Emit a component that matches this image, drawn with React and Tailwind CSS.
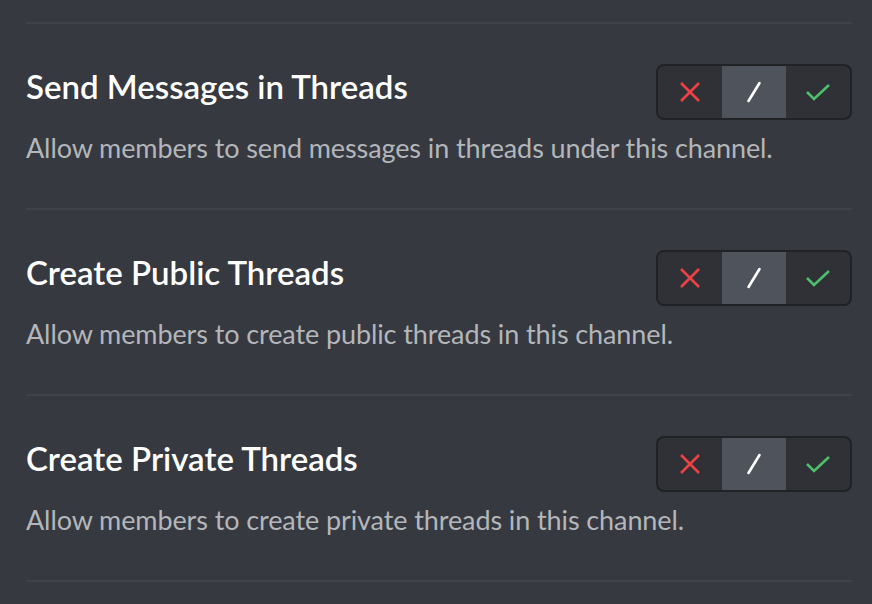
import React from "react";

const rows = [
  { title: "Send Messages in Threads", desc: "Allow members to send messages in threads under this channel." },
  { title: "Create Public Threads", desc: "Allow members to create public threads in this channel." },
  { title: "Create Private Threads", desc: "Allow members to create private threads in this channel." },
];

function Toggle() {
  return (
    <div className="flex h-[56px] w-[196px] shrink-0 overflow-hidden rounded-[8px] border-2 border-[#202225] bg-[#2f3136]">
      <div className="flex w-[64px] items-center justify-center">
        <svg width="22" height="22" viewBox="0 0 22 22" fill="none">
          <path d="M2 2L20 20M20 2L2 20" stroke="#ed4245" strokeWidth="2.6" strokeLinecap="butt" />
        </svg>
      </div>
      <div className="flex w-[64px] items-center justify-center bg-[#4f545c]">
        <svg width="16" height="24" viewBox="0 0 16 24" fill="none">
          <path d="M13.5 3L2.5 21" stroke="#ffffff" strokeWidth="2.6" strokeLinecap="round" />
        </svg>
      </div>
      <div className="flex w-[64px] items-center justify-center">
        <svg width="26" height="20" viewBox="0 0 26 20" fill="none">
          <path d="M2 10L9 17L24 3" stroke="#4bbf69" strokeWidth="2.6" strokeLinecap="butt" strokeLinejoin="miter" />
        </svg>
      </div>
    </div>
  );
}

export default function App() {
  return (
    <div
      className="h-[604px] w-[872px] overflow-hidden bg-[#36393f] pl-[26px] pr-[20px] pt-[22px]"
      style={{ fontFamily: 'Lato, "Noto Sans", sans-serif' }}
    >
      {rows.map((r) => (
        <div key={r.title}>
          <div className="h-[2px] bg-[#3f4248]" />
          <div className="flex h-[184px] items-start justify-between pt-[40px]">
            <div className="flex min-w-0 flex-1 flex-col whitespace-nowrap">
              <div className="mt-[2px] text-[33px] font-semibold leading-[40px] text-white">
                {r.title}
              </div>
              <div className="mt-[24px] text-[27px] leading-[36px] tracking-[-0.1px] text-[#b3b6ba]">
                {r.desc}
              </div>
            </div>
            <Toggle />
          </div>
        </div>
      ))}
      <div className="h-[2px] bg-[#3f4248]" />
    </div>
  );
}
